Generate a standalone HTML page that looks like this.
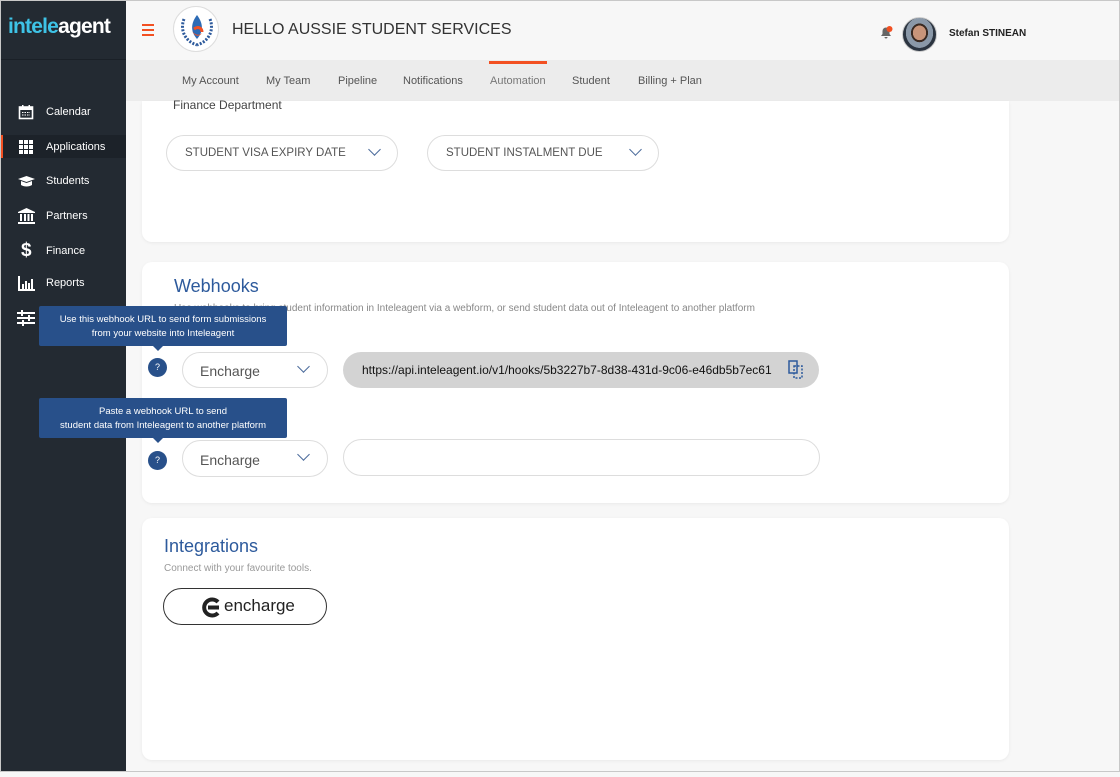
<!DOCTYPE html>
<html><head><style>
*{box-sizing:border-box;margin:0;padding:0}
body{width:1120px;height:777px;overflow:hidden;background:#f7f7f7;font-family:"Liberation Sans",sans-serif;position:relative}
.frame{position:absolute;left:0;top:0;width:1120px;height:772px;border:1px solid #c8c8c8;border-bottom:1px solid #c8c8c8;pointer-events:none;z-index:10}
.side{position:absolute;left:0;top:0;width:126px;height:772px;background:#232a32}
.side .logo{height:60px;border-bottom:1px solid #1a2027;color:#3ec3e6;font-size:21px;font-weight:bold;padding:15px 0 0 8px;letter-spacing:-0.8px}
.item{position:absolute;left:0;width:126px;height:22px;color:#fff;font-size:11px;display:flex;align-items:center}
.item span{position:absolute;left:46px}
.item svg{position:absolute;left:18px}
.act{background:#1c2229;border-left:3px solid #f25022}
.top{position:absolute;left:126px;top:0;right:0;height:60px;background:#f7f7f7}
.nav{position:absolute;left:126px;top:60px;right:0;height:41px;background:#ececec;font-size:11px;color:#555}
.nav span{position:absolute;top:15px}
.card{position:absolute;left:142px;width:867px;background:#fff;border-radius:10px;box-shadow:0 1px 3px rgba(0,0,0,.06)}
.pill{position:absolute;border:1px solid #ddd;border-radius:20px;background:#fff;color:#555}
.chev{position:absolute;width:9px;height:9px;border-right:1.5px solid #4a6a9a;border-bottom:1.5px solid #4a6a9a;transform:rotate(45deg)}
.tip{position:absolute;left:39px;width:248px;height:40px;background:#28508a;color:#fff;font-size:9.5px;text-align:center;line-height:14px;padding-top:7px;border-radius:2px}
.tip:after{content:"";position:absolute;left:114px;bottom:-5px;border:5px solid transparent;border-top-color:#28508a;border-bottom:0}
.q{position:absolute;left:148px;width:19px;height:19px;border-radius:50%;background:#28508a;color:#fff;font-size:9px;text-align:center;line-height:19px}
</style></head><body>
<div class="frame"></div>
<div class="side">
<div class="logo">intele<span style="color:#fff">agent</span></div>
<div class="item" style="top:101px"><svg width="16" height="16" viewBox="0 0 16 16"><rect x="1.5" y="3" width="13" height="11.5" fill="none" stroke="#fff" stroke-width="1.6"/><rect x="1.5" y="3" width="13" height="3" fill="#fff"/><rect x="4" y="1" width="1.5" height="3" fill="#fff"/><rect x="10.5" y="1" width="1.5" height="3" fill="#fff"/><path d="M4 8.5h8M4 11h8" stroke="#fff" stroke-dasharray="1.5 1"/></svg><span>Calendar</span></div>
<div class="item act" style="top:135px;height:23px"><svg width="16" height="16" viewBox="0 0 16 16" style="left:15px"><g fill="#fff"><rect x="1" y="1" width="4" height="4"/><rect x="6" y="1" width="4" height="4"/><rect x="11" y="1" width="4" height="4"/><rect x="1" y="6" width="4" height="4"/><rect x="6" y="6" width="4" height="4"/><rect x="11" y="6" width="4" height="4"/><rect x="1" y="11" width="4" height="4"/><rect x="6" y="11" width="4" height="4"/><rect x="11" y="11" width="4" height="4"/></g></svg><span style="left:43px">Applications</span></div>
<div class="item" style="top:170px"><svg width="17" height="14" viewBox="0 0 17 14"><path d="M0 5l8.5-3 8.5 3-8.5 3z M3 7v4c3 2 8 2 11 0V7l-5.5 2z" fill="#fff"/></svg><span>Students</span></div>
<div class="item" style="top:205px"><svg width="17" height="16" viewBox="0 0 17 16"><path d="M0 4L8.5 0 17 4v1H0zM2 6h2v7H2zM6 6h2v7H6zM9.5 6h2v7h-2zM13 6h2v7h-2zM0 14h17v2H0z" fill="#fff"/></svg><span>Partners</span></div>
<div class="item" style="top:240px"><span style="left:21px;font-size:19px;font-weight:bold">$</span><span>Finance</span></div>
<div class="item" style="top:272px"><svg width="17" height="15" viewBox="0 0 17 15"><path d="M1 0v14h16" fill="none" stroke="#fff" stroke-width="2"/><path d="M4 8h2v5H4zM7 5h2v8H7zM10 7h2v6h-2zM13 3h2v10h-2z" fill="#fff"/></svg><span>Reports</span></div>
<svg style="position:absolute;left:17px;top:310px" width="18" height="16" viewBox="0 0 18 16"><path d="M0 3h18M0 8h18M0 13h18" stroke="#fff" stroke-width="2"/><path d="M5 0v6M12 5v6M6 10v6" stroke="#fff" stroke-width="2"/></svg>
</div>
<div class="top">
<div style="position:absolute;left:16px;top:24px;width:12px"><div style="height:2px;background:#f25022;margin-bottom:3px"></div><div style="height:2px;background:#f25022;margin-bottom:3px"></div><div style="height:2px;background:#f25022"></div></div>
<div style="position:absolute;left:47px;top:6px;width:46px;height:46px;border-radius:50%;background:#fff;border:1px solid #ddd"><svg width="46" height="46" viewBox="0 0 46 46"><path d="M10 12c-4 10 0 22 13 26M36 12c4 10 0 22-13 26" fill="none" stroke="#2d5a9c" stroke-width="3" stroke-dasharray="2 1.5"/><path d="M23 8c-6 8-7 16 0 24 7-8 6-16 0-24z" fill="#2d6bb5"/><path d="M18 24c3 4 7 5 10 2-2 3-6 5-10-2z" fill="#f25022"/><path d="M20 22c4-3 8-1 8 3" stroke="#f25022" stroke-width="3" fill="none"/></svg></div>
<div style="position:absolute;left:106px;top:21px;font-size:16px;color:#333">HELLO AUSSIE STUDENT SERVICES</div>
<svg style="position:absolute;left:753px;top:25px" width="14" height="14" viewBox="0 0 14 14"><path d="M2 11h10l-1.5-2V6a3.5 3.5 0 0 0-7 0v3z M5.5 12h3a1.5 1.5 0 0 1-3 0z" fill="#666"/><circle cx="10.5" cy="4" r="3" fill="#f25022"/></svg>
<div style="position:absolute;left:776px;top:17px;width:35px;height:35px;border-radius:50%;background:radial-gradient(ellipse at 50% 45%,#c9957a 0 28%,#3a2a22 29% 36%,#8a98a8 37% 58%,#2b3440 59%);border:1px solid #ccc"></div>
<div style="position:absolute;left:823px;top:28px;font-size:10px;font-weight:bold;color:#222">Stefan STINEAN</div>
</div>
<div class="nav">
<span style="left:56px">My Account</span><span style="left:140px">My Team</span><span style="left:212px">Pipeline</span><span style="left:277px">Notifications</span><span style="left:364px;color:#777">Automation</span><span style="left:446px">Student</span><span style="left:512px">Billing + Plan</span>
<div style="position:absolute;left:363px;top:1px;width:58px;height:3px;background:#f25022"></div>
</div>
<div class="card" style="top:101px;height:141px;border-radius:0 0 10px 10px">
<div style="position:absolute;left:31px;top:-3px;font-size:12px;color:#444">Finance Department</div>
<div class="pill" style="left:24px;top:34px;width:232px;height:36px;font-size:11.5px;padding:11px 0 0 18px">STUDENT VISA EXPIRY DATE<i class="chev" style="left:203px;top:9px"></i></div>
<div class="pill" style="left:285px;top:34px;width:232px;height:36px;font-size:11.5px;padding:11px 0 0 18px">STUDENT INSTALMENT DUE<i class="chev" style="left:203px;top:9px"></i></div>
</div>
<div class="card" style="top:262px;height:241px">
<div style="position:absolute;left:32px;top:14px;font-size:18px;color:#2d5a9c">Webhooks</div>
<div style="position:absolute;left:32px;top:41px;font-size:10px;color:#888">Use webhooks to bring student information in Inteleagent via a webform, or send student data out of Inteleagent to another platform</div>
<div class="pill" style="left:40px;top:90px;width:146px;height:36px;font-size:14px;padding:10px 0 0 17px">Encharge<i class="chev" style="left:116px;top:9px"></i></div>
<div style="position:absolute;left:201px;top:90px;width:476px;height:36px;border-radius:18px;background:#d3d3d3;font-size:12px;color:#111;padding:11px 0 0 19px">https://api.inteleagent.io/v1/hooks/5b3227b7-8d38-431d-9c06-e46db5b7ec61
<svg style="position:absolute;left:445px;top:8px" width="16" height="19" viewBox="0 0 16 19"><path d="M1 1h8v12H1z" fill="none" stroke="#2d5a9c" stroke-width="1.5"/><path d="M6 6h8v12H6z" fill="none" stroke="#2d5a9c" stroke-width="1.5" stroke-dasharray="2 1.5"/></svg></div>
<div class="pill" style="left:40px;top:178px;width:146px;height:37px;font-size:14px;padding:11px 0 0 17px">Encharge<i class="chev" style="left:116px;top:9px"></i></div>
<div class="pill" style="left:201px;top:177px;width:477px;height:37px"></div>
</div>
<div class="q" style="top:358px">?</div>
<div class="q" style="top:451px">?</div>
<div class="tip" style="top:306px">Use this webhook URL to send form submissions<br>from your website into Inteleagent</div>
<div class="tip" style="top:398px">Paste a webhook URL to send<br>student data from Inteleagent to another platform</div>
<div class="card" style="top:518px;height:242px">
<div style="position:absolute;left:22px;top:18px;font-size:18px;color:#2d5a9c">Integrations</div>
<div style="position:absolute;left:22px;top:45px;font-size:10px;color:#999">Connect with your favourite tools.</div>
<div style="position:absolute;left:21px;top:70px;width:164px;height:37px;border:1px solid #333;border-radius:19px">
<svg style="position:absolute;left:36px;top:8px" width="21" height="21" viewBox="0 0 21 21"><path d="M18 5A8 8 0 1 0 18 16" fill="none" stroke="#222" stroke-width="4"/><path d="M8 10.5h11" stroke="#222" stroke-width="4"/></svg>
<span style="position:absolute;left:60px;top:7px;font-size:17px;color:#222">encharge</span></div>
</div>
</body></html>
